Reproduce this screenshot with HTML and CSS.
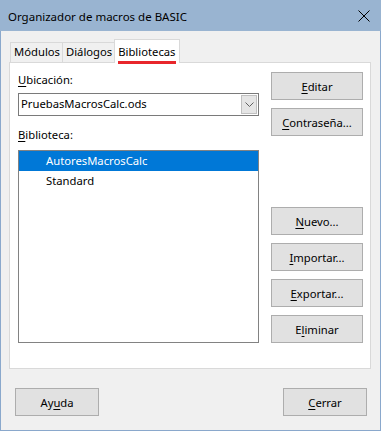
FILE: index.html
```html
<!DOCTYPE html>
<html lang="es">
<head>
	<meta charset="UTF-8">
	<meta name="viewport" content="width=device-width, initial-scale=1.0">
	<title>Organizador de macros de BASIC</title>
	<link rel="stylesheet" href="styles.css">
</head>
<body>
	<div class="window">
		<header class="titlebar">
			<span class="title">Organizador de macros de BASIC</span>
			<svg class="close" width="12" height="12" viewBox="0 0 12 12">
				<path d="M0.5 0.5 L11.5 11.5 M11.5 0.5 L0.5 11.5" stroke="#000" stroke-width="1" fill="none"></path>
			</svg>
		</header>

		<main class="client">
			<nav class="tabs">
				<span class="tab">Módulos</span>
				<span class="tab">Diálogos</span>
				<span class="tab tab-active">Bibliotecas</span>
			</nav>

			<section class="panel">
				<div class="fields">
					<label class="field-label"><u>U</u>bicación:</label>
					<div class="combo">
						<span class="combo-value">PruebasMacrosCalc.ods</span>
						<span class="combo-arrow">
							<svg width="9" height="5" viewBox="0 0 9 5">
								<path d="M0.5 0.5 L4.5 4.5 L8.5 0.5" stroke="#606060" stroke-width="1" fill="none"></path>
							</svg>
						</span>
					</div>

					<label class="field-label field-label-list"><u>B</u>iblioteca:</label>
					<ul class="list">
						<li class="list-item selected">AutoresMacrosCalc</li>
						<li class="list-item">Standard</li>
					</ul>
				</div>

				<div class="side">
					<button class="btn"><u>E</u>ditar</button>
					<button class="btn"><u>C</u>ontraseña...</button>
					<button class="btn btn-push"><u>N</u>uevo...</button>
					<button class="btn"><u>I</u>mportar...</button>
					<button class="btn"><u>E</u>xportar...</button>
					<button class="btn">E<u>l</u>iminar</button>
				</div>
			</section>

			<footer class="actions">
				<button class="btn btn-wide">Ay<u>u</u>da</button>
				<button class="btn btn-wide"><u>C</u>errar</button>
			</footer>
		</main>
	</div>
</body>
</html>
```

FILE: styles.css
```css
html {
	box-sizing: border-box;
}

*, *:before, *:after {
	box-sizing: inherit;
}

body {
	margin: 0;
	padding: 0;
	background: #f0f0f0;
	font-family: "Noto Sans", "Open Sans", sans-serif;
	font-size: 11.25px;
	color: #000;
}

u {
	text-decoration: underline;
	text-underline-offset: 2px;
}

.window {
	width: 381px;
	height: 431px;
	display: flex;
	flex-direction: column;
	border: 1px solid #8aa8cc;
	border-top: 0;
	background: #f0f0f0;
}

.titlebar {
	height: 31px;
	flex: none;
	display: flex;
	align-items: center;
	justify-content: space-between;
	padding: 0 11px 0 8px;
	margin: 0 -1px;
	background: #99b4d1;
}

.title {
	font-size: 11.5px;
	padding-top: 1px;
}

.client {
	flex: 1;
	padding: 8px 9px 0 8px;
	display: flex;
	flex-direction: column;
}

.tabs {
	display: flex;
	align-items: flex-end;
	height: 23px;
	padding-left: 1px;
	position: relative;
	z-index: 1;
}

.tab {
	height: 20px;
	padding: 0 2px 0 3px;
	border: 1px solid #d9d9d9;
	border-bottom: 0;
	border-right: 0;
	background: #f0f0f0;
	line-height: 18px;
}

.tab-active {
	height: 24px;
	margin-bottom: -1px;
	padding: 3px 3px 0;
	border-right: 1px solid #d9d9d9;
	background: #fff;
	position: relative;
}

.tab-active:after {
	content: "";
	position: absolute;
	left: 3px;
	right: 3px;
	top: 21px;
	height: 3px;
	background: #e8262b;
}

.panel {
	height: 307px;
	flex: none;
	display: grid;
	grid-template-columns: 241px 92px;
	column-gap: 12px;
	padding: 9px 7px 25px 8px;
	background: #fff;
	border: 1px solid #d9d9d9;
}

.fields {
	display: flex;
	flex-direction: column;
}

.field-label {
	line-height: 16px;
	margin-bottom: 5px;
}

.field-label-list {
	margin-top: 11px;
	margin-bottom: 7px;
}

.combo {
	height: 23px;
	display: flex;
	align-items: stretch;
	border: 1px solid #7a7a7a;
	background: #fff;
}

.combo-value {
	flex: 1;
	padding-left: 2px;
	line-height: 20px;
}

.combo-arrow {
	width: 16px;
	display: flex;
	align-items: center;
	justify-content: center;
	margin: 1px;
	background: #e5e5e5;
	border: 1px solid #c0c0c0;
}

.list {
	flex: 1;
	margin: 0;
	padding: 0;
	list-style: none;
	border: 1px solid #828282;
	background: #fff;
}

.list-item {
	height: 19px;
	line-height: 19px;
	padding-left: 27px;
}

.list-item.selected {
	height: 20px;
	line-height: 20px;
	background: #0078d7;
	color: #fff;
}

.side {
	display: flex;
	flex-direction: column;
	gap: 8px;
}

.btn {
	height: 28px;
	padding: 0;
	font-family: inherit;
	font-size: 11.25px;
	color: #000;
	background: #e1e1e1;
	border: 1px solid #adadad;
	border-radius: 0;
}

.btn-push {
	margin-top: auto;
}

.actions {
	display: flex;
	justify-content: space-between;
	padding: 19px 4px 0 6px;
}

.btn-wide {
	width: 84px;
}
```
